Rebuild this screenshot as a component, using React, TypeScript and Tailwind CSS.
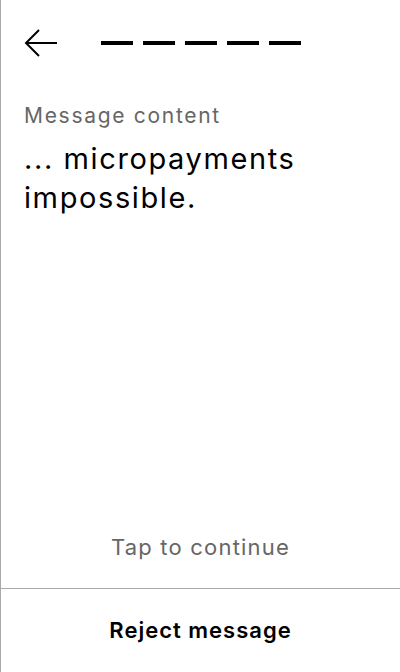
const ProgressDashes = ({ count = 5 }: { count?: number }) => (
  <div className="flex gap-[10px]">
    {Array.from({ length: count }).map((_, i) => (
      <span key={i} className="block h-[4px] w-[32px] bg-black" />
    ))}
  </div>
);

const BackArrow = () => (
  <svg width="34" height="30" viewBox="0 0 34 30" fill="none" stroke="black" strokeWidth="2">
    <path d="M33 15H2" />
    <path d="M15 2L2 15L15 28" />
  </svg>
);

export default function App() {
  return (
    <div
      className="flex h-[672px] w-[400px] flex-col border-l border-[#aaaaaa] bg-white text-black"
      style={{ fontFamily: 'Inter, "Noto Sans", sans-serif' }}
    >
      <div className="flex h-[86px] items-center pl-[23px]">
        <BackArrow />
        <div className="ml-[43px]">
          <ProgressDashes />
        </div>
      </div>

      <div className="flex flex-1 flex-col px-[23px] pt-[15px]">
        <p className="text-[21px] leading-[30px] tracking-[1.7px] text-[#666666]">
          Message content
        </p>
        <p className="mt-[8px] text-[29px] leading-[39px] tracking-[1.6px]">
          ... micropayments impossible.
        </p>
        <p className="mt-auto pb-[24px] text-center text-[22px] tracking-[1.2px] text-[#666666]">
          Tap to continue
        </p>
      </div>

      <div className="flex h-[84px] items-center justify-center border-t border-[#aaaaaa]">
        <button className="text-[22px] font-semibold tracking-[1px]">Reject message</button>
      </div>
    </div>
  );
}
